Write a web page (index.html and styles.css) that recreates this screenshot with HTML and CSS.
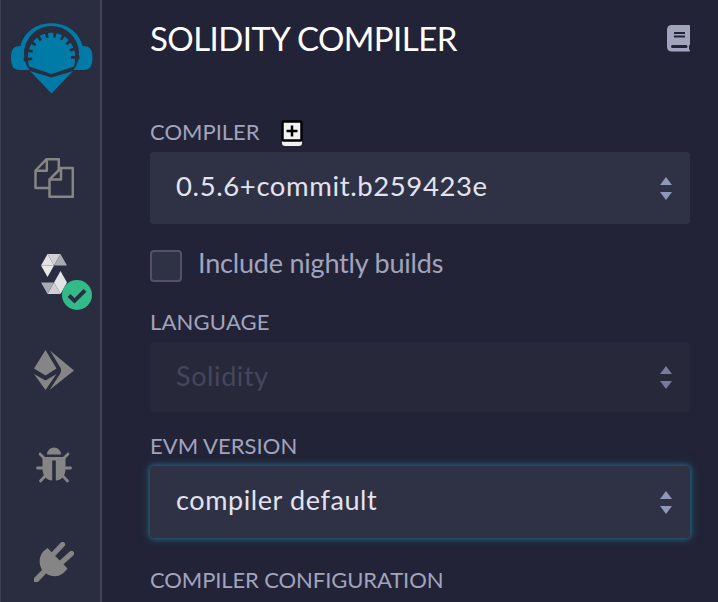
FILE: index.html
```html
<!DOCTYPE html>
<html lang="en">
<head>
<meta charset="utf-8">
<title>Solidity Compiler</title>
<link rel="stylesheet" href="styles.css">
</head>
<body>
<div class="app">
  <nav class="sidebar">
    <div class="logo">
      <svg width="84" height="74" viewBox="0 0 84 74">
        <path class="brand" d="M10.500 26C14 12 26 3.200 41.500 3.200S69 12 72.500 26c7 0 10 3 10 11 0 9-2 13-9 13H63.500a27.500 27.500 0 1 0-44 0H10C3 50 1 46 1 37c0-8 3-11 9.500-11z"/>
        <path class="brand" d="M20 51l21.500 6.500L63 51 41.500 73.500z"/>
        <path class="brand" d="M41.500 54L19 46.500Q17.800 43 17.800 36.500a23.700 23.700 0 0 1 47.400 0Q65.200 43 64 46.500z"/>
        <path d="M18.800 43.500a23.700 23.700 0 1 1 45.400 0" fill="none" stroke="#2a2c3f" stroke-width="8.500" stroke-dasharray="3 5.600" stroke-dashoffset="-3"/>
      </svg>
    </div>
    <div class="item">
      <svg width="40" height="40" viewBox="0 0 40 40" fill="none" stroke="#858585" stroke-width="2.500" stroke-linejoin="round">
        <path d="M15 30H1.500V12.500L12.500 1.200h12.300V12M12.800 1.500v11.300H1.500"/>
        <path d="M15.500 21.500L27 10h11.800v28.800H15.500zM27 10v11.500H15.500"/>
      </svg>
    </div>
    <div class="item">
      <svg class="solidity" width="26" height="40" viewBox="0 0 26 40">
        <path fill="#e2e2e5" d="M6.500 0L0 11.500h13z"/><path fill="#cfcfd4" d="M6.500 0h13L13 11.500z"/><path fill="#a9aab4" d="M19.500 0L26 11.500H13z"/><path fill="#e8e8ea" d="M0 11.500h13L6.500 23z"/>
        <path fill="#e2e2e5" d="M19.500 17L26 28.500 19.500 40 13 28.500z"/><path fill="#cfcfd4" d="M13 28.500L6.500 40h13z"/><path fill="#a9aab4" d="M0 28.500h13L6.500 40z"/>
      </svg>
      <svg class="badge" width="30" height="30" viewBox="0 0 30 30"><circle cx="15" cy="15" r="15" fill="#32ba89"/><path d="M7 15.500l5.500 5.300L23 10.300" fill="none" stroke="#2a2c3f" stroke-width="4"/></svg>
    </div>
    <div class="item">
      <svg width="40" height="40" viewBox="0 0 40 40" fill="#858585"><path d="M11.500 0L22.500 18.500l-11 7L0 18.500zM0 24l11.500 6.500L22.500 24 11.500 40zM16 .500L40 20.500 15.500 40 26 24q2-4 0-7z"/></svg>
    </div>
    <div class="item">
      <svg class="bug" width="36" height="36" viewBox="0 0 36 36"><g fill="#858585"><path d="M11 7.500a7 7 0 0 1 14 0zM6.500 10h23v12c0 7-4.500 11.500-9.700 11.500V13.500h-3.600v20C11 33.500 6.500 29 6.500 22z"/></g><path d="M4 7l5 5M32 7l-5 5M1.500 21H8M34.500 21H28M4.500 34l6-6.500M31.500 34l-6-6.500" fill="none" stroke="#858585" stroke-width="2.800" stroke-linecap="round"/></svg>
    </div>
    <div class="item">
      <svg width="40" height="40" viewBox="0 0 40 40"><path fill="#858585" d="M13.500 6L33.500 26.500l-2 2.500C26 35.500 18 35.500 12 31.500L4 40H0V36l8-8C4 21 5 12.500 11 8z"/><path d="M19.500 12l9-9.500M27.500 20.500l10-9" stroke="#858585" stroke-width="5.200" stroke-linecap="round"/></svg>
    </div>
  </nav>
  <main class="panel">
    <header class="head">
      <h1><span class="t-title">SOLIDITY COMPILER</span></h1>
      <svg class="book" width="24" height="27" viewBox="0 0 24 27"><path fill="#a2a3bd" d="M5 0h17q1 0 1 1v18q0 1-1 1.500v4q1 0 1 1t-1 1H5q-5 0-5-5V5q0-5 5-5z"/><path d="M7 8h11M7 11.500h11" stroke="#222336" stroke-width="2"/><path d="M5.500 21.500H19" stroke="#222336" stroke-width="3" stroke-linecap="round"/></svg>
    </header>
    <div class="label first"><span class="t-compiler">COMPILER</span>
      <svg class="add" width="22" height="26" viewBox="0 0 22 26"><rect x="1" y="3" width="20" height="23" rx="3" fill="#f1f1f1"/><rect x="1.500" y="1.500" width="19" height="19" rx="1" fill="#f1f1f1" stroke="#000" stroke-width="2.500"/><path d="M5.500 11h11M11 5.500v11" stroke="#000" stroke-width="2.500"/></svg>
    </div>
    <div class="select version"><span class="t-version">0.5.6+commit.b259423e</span><i class="arrows"></i></div>
    <div class="check"><i class="box"></i><span class="t-nightly">Include nightly builds</span></div>
    <div class="label language"><span class="t-language">LANGUAGE</span></div>
    <div class="select disabled"><span class="t-solidity">Solidity</span><i class="arrows"></i></div>
    <div class="label evm"><span class="t-evm">EVM VERSION</span></div>
    <div class="select focused"><span class="t-default">compiler default</span><i class="arrows"></i></div>
    <div class="label config"><span class="t-config">COMPILER CONFIGURATION</span></div>
  </main>
</div>
</body>
</html>
```
FILE: styles.css
```css
* { box-sizing: border-box; }
body { margin: 0; overflow: hidden; background: #222336; font-family: Lato, "Open Sans", sans-serif; }
svg { display: block; flex: none; }
.app { display: flex; height: 602px; overflow: hidden; }
.sidebar { width: 102px; flex: none; background: #2a2c3f; border-left: 1px solid #3b3d50; border-right: 2px solid #444459; }
.logo { height: 130px; padding: 20px 0 0 9px; }
.brand { fill: #007aa6; }
.item { position: relative; height: 96px; display: flex; align-items: center; justify-content: center; padding-left: 7px; }
.solidity { margin-right: 1px; }
.badge { position: absolute; left: 60.5px; top: 53.5px; }
.bug { margin-bottom: 2px; }
.panel { flex: 1; padding: 0 28px 0 48px; color: #a2a3bd; }
.head { height: 76px; display: flex; align-items: center; justify-content: space-between; }
.book { margin: 1px -1px 0 0; }
h1 { margin: 0; font-size: 33px; line-height: 40px; font-weight: 400; color: #fff; letter-spacing: -0.57px; }
.label { display: flex; align-items: center; gap: 21px; height: 30px; font-size: 22px; line-height: 30px; white-space: nowrap; }
.first { margin-top: 41px; }
.add { margin-top: 2px; }
.language { margin-top: 25px; letter-spacing: 0.2px; }
.evm { margin-top: 19px; letter-spacing: 0.05px; }
.config { margin-top: 27px; letter-spacing: -0.1px; }
.select { display: flex; align-items: center; justify-content: space-between; height: 72px; padding: 0 18px 6px 26px; border-radius: 4px; background: #2f3144; color: #e2e3ef; font-size: 27px; letter-spacing: 0.6px; white-space: nowrap; }
.version { margin-top: 5px; font-size: 27.5px; letter-spacing: 0.6px; }
.disabled { height: 70px; margin-top: 5px; padding-bottom: 4px; background: #27293b; color: #45465b; }
.focused { margin-top: 5px; box-shadow: 0 0 4px 1px #285d7a, 0 0 10px 2px #23435a; }
.arrows { display: flex; flex-direction: column; gap: 7px; padding-top: 6px; }
.arrows::before, .arrows::after { content: ""; border: 6px solid transparent; }
.arrows::before { border-top: 0; border-bottom: 8px solid #8e98b8; }
.arrows::after { border-bottom: 0; border-top: 8px solid #8e98b8; }
.disabled .arrows { padding-top: 4px; }
.disabled .arrows::before { border-bottom-color: #777b9b; }
.disabled .arrows::after { border-top-color: #777b9b; }
.check { display: flex; align-items: center; gap: 16px; height: 32px; margin-top: 26px; font-size: 27px; letter-spacing: -0.2px; }
.check span { margin-top: -8px; }
.box { width: 32px; height: 32px; border: 2px solid #51526a; border-radius: 4px; background: #2f3144; }
```
